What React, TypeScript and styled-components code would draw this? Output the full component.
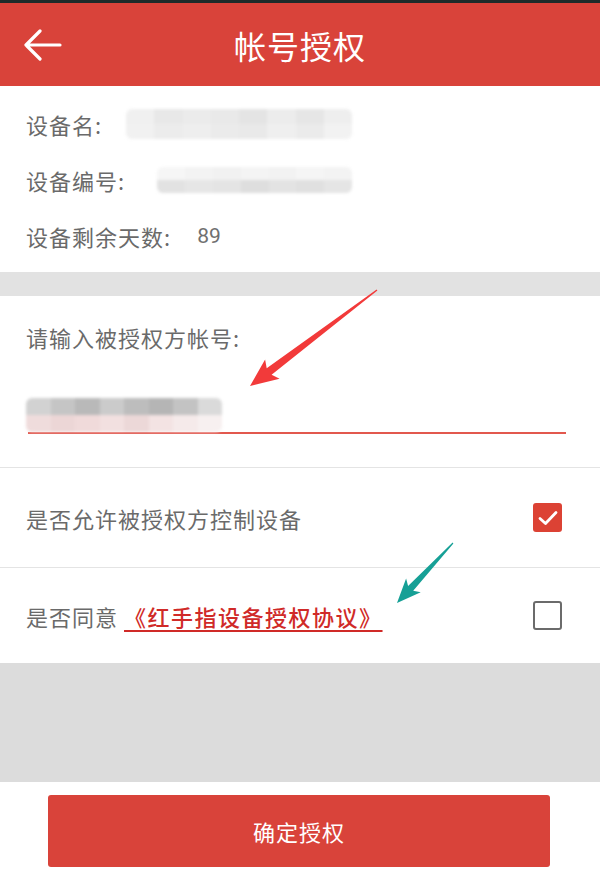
import React from 'react';
import styled, { createGlobalStyle } from 'styled-components';

const GlobalStyle = createGlobalStyle`
  html, body {
    margin: 0;
    padding: 0;
    background: #ffffff;
  }
  body {
    font-family: "Noto Sans CJK SC", "Noto Sans", sans-serif;
  }
`;

const Page = styled.div`
  position: relative;
  width: 600px;
  height: 878px;
  display: flex;
  flex-direction: column;
  background: #ffffff;
  overflow: hidden;
`;

const StatusStrip = styled.div`
  height: 3px;
  background: #1e2b2a;
`;

const Header = styled.header`
  height: 83px;
  background: #d9433a;
  display: flex;
  align-items: center;
  position: relative;
`;

const BackButton = styled.div`
  width: 64px;
  padding-left: 22px;
  display: flex;
  align-items: center;
`;

const Title = styled.h1`
  flex: 1;
  margin: 0 86px 0 0;
  text-align: center;
  color: #ffffff;
  font-size: 32px;
  font-weight: 400;
  letter-spacing: 1px;
`;

const InfoSection = styled.section`
  padding: 10px 0 8px 26px;
  background: #ffffff;
`;

const InfoRow = styled.div`
  height: 56px;
  display: flex;
  align-items: center;
`;

const Label = styled.span`
  color: #6a6a6a;
  font-size: 22px;
  letter-spacing: 1px;
  white-space: nowrap;
`;

const Value = styled.span`
  color: #707070;
  font-size: 21px;
  font-family: "Roboto", "Noto Sans", sans-serif;
  margin-left: 26px;
`;

const Mosaic = styled.div<{ $w: number; $h: number; $ml: number }>`
  width: ${p => p.$w}px;
  height: ${p => p.$h}px;
  margin-left: ${p => p.$ml}px;
  display: flex;
  flex-direction: column;
  filter: blur(1.4px);
  border-radius: 6px;
  overflow: hidden;
`;

const MosaicLine = styled.div`
  flex: 1;
  display: flex;
`;

const MosaicCell = styled.div`
  flex: 1;
`;

const Gap = styled.div<{ $h: number; $bg: string }>`
  height: ${p => p.$h}px;
  background: ${p => p.$bg};
`;

const AccountSection = styled.section`
  padding: 25px 34px 33px 26px;
`;

const FieldLabel = styled(Label)`
  display: block;
  line-height: 32px;
`;

const InputLine = styled.div`
  margin-top: 43px;
  margin-left: 2px;
  height: 36px;
  border-bottom: 2px solid #e2584e;
  display: flex;
  align-items: flex-end;
`;

const Divider = styled.div`
  height: 1px;
  background: #e4e4e4;
`;

const OptionRow = styled.div<{ $h: number }>`
  height: ${p => p.$h}px;
  display: flex;
  align-items: center;
  justify-content: space-between;
  padding: 0 38px 0 26px;
`;

const AgreementLink = styled.span`
  color: #d02a28;
  font-size: 22px;
  font-weight: 500;
  text-decoration: underline;
  text-decoration-thickness: 1.5px;
  text-underline-offset: 4px;
  margin-left: 6px;
  letter-spacing: 1.5px;
`;

const Checkbox = styled.div<{ $checked?: boolean }>`
  width: 29px;
  height: 29px;
  box-sizing: border-box;
  border-radius: 3px;
  background: ${p => (p.$checked ? '#dc4234' : 'transparent')};
  border: ${p => (p.$checked ? 'none' : '2.5px solid #6b6b6b')};
  display: flex;
  align-items: center;
  justify-content: center;
`;

const FillArea = styled.div`
  flex: 1;
  background: #dcdcdc;
`;

const Footer = styled.footer`
  height: 96px;
  box-sizing: border-box;
  padding: 13px 50px 11px 48px;
  background: #ffffff;
`;

const ConfirmButton = styled.button`
  width: 100%;
  height: 72px;
  border: none;
  border-radius: 3px;
  background: #d9433a;
  color: #ffffff;
  font-family: "Noto Sans CJK SC", sans-serif;
  font-size: 22px;
  letter-spacing: 1px;
`;

const Annotations = styled.svg`
  position: absolute;
  left: 0;
  top: 0;
  pointer-events: none;
`;

const mosaicRows: Record<string, string[][]> = {
  name: [
    ['#f0f0f0', '#e8e8e8', '#ebebeb', '#e9e9e9', '#e4e4e4', '#ececec', '#e6e6e6', '#eeeeee'],
    ['#f1f1f1', '#ececec', '#eeeeee', '#ebebeb', '#e9e9e9', '#efefef', '#ebebeb', '#f2f2f2'],
  ],
  serial: [
    ['#f6f6f6', '#f3f3f3', '#f1f1f1', '#f4f4f4', '#f2f2f2', '#f5f5f5', '#f3f3f3'],
    ['#e2e2e2', '#e6e6e6', '#e4e4e4', '#dedede', '#e3e3e3', '#e0e0e0', '#e5e5e5'],
  ],
  account: [
    ['#d2d2d2', '#c5c5c5', '#b9b9b9', '#cbcbcb', '#bdbdbd', '#b5b5b5', '#c3c3c3', '#dadada'],
    ['#efdcdc', '#ecd6d6', '#f0dada', '#f2e0e0', '#ecd8d8', '#f3e3e3', '#f5eaea', '#f7f0f0'],
  ],
};

const Blur = ({ kind, w, h, ml }: { kind: string; w: number; h: number; ml: number }) => (
  <Mosaic $w={w} $h={h} $ml={ml}>
    {mosaicRows[kind].map((line, i) => (
      <MosaicLine key={i}>
        {line.map((c, j) => (
          <MosaicCell key={j} style={{ background: c }} />
        ))}
      </MosaicLine>
    ))}
  </Mosaic>
);

// build a tapered annotation arrow from tail to tip
function arrowPoints(tx: number, ty: number, px: number, py: number, head: number, shaft: number, wing: number) {
  const dx = px - tx;
  const dy = py - ty;
  const len = Math.hypot(dx, dy);
  const ux = dx / len;
  const uy = dy / len;
  const nx = -uy;
  const ny = ux;
  const bx = px - ux * head;
  const by = py - uy * head;
  const wx = bx - ux * 4;
  const wy = by - uy * 4;
  const pts = [
    [tx + nx * 0.6, ty + ny * 0.6],
    [bx + nx * shaft, by + ny * shaft],
    [wx + nx * wing, wy + ny * wing],
    [px, py],
    [wx - nx * wing, wy - ny * wing],
    [bx - nx * shaft, by - ny * shaft],
    [tx - nx * 0.6, ty - ny * 0.6],
  ];
  return pts.map(p => p.map(v => v.toFixed(1)).join(',')).join(' ');
}

const App = () => (
  <Page>
    <GlobalStyle />
    <StatusStrip />
    <Header>
      <BackButton>
        <svg width="40" height="32" viewBox="0 0 40 32">
          <path d="M18 2 L4 16 L18 30 M4 16 H38" stroke="#ffffff" strokeWidth="3.2" fill="none" strokeLinecap="round" strokeLinejoin="round" />
        </svg>
      </BackButton>
      <Title>帐号授权</Title>
    </Header>

    <InfoSection>
      <InfoRow>
        <Label>设备名:</Label>
        <Blur kind="name" w={226} h={30} ml={24} />
      </InfoRow>
      <InfoRow>
        <Label>设备编号:</Label>
        <Blur kind="serial" w={195} h={26} ml={32} />
      </InfoRow>
      <InfoRow>
        <Label>设备剩余天数:</Label>
        <Value>89</Value>
      </InfoRow>
    </InfoSection>

    <Gap $h={24} $bg="#e2e2e2" />

    <AccountSection>
      <FieldLabel>请输入被授权方帐号:</FieldLabel>
      <InputLine>
        <Blur kind="account" w={196} h={34} ml={-2} />
      </InputLine>
    </AccountSection>

    <Divider />
    <OptionRow $h={99}>
      <Label>是否允许被授权方控制设备</Label>
      <Checkbox $checked>
        <svg width="20" height="16" viewBox="0 0 20 16">
          <path d="M2 8.5 L7.5 13.5 L18 2.5" stroke="#ffffff" strokeWidth="2.8" fill="none" strokeLinecap="round" strokeLinejoin="round" />
        </svg>
      </Checkbox>
    </OptionRow>
    <Divider />
    <OptionRow $h={95}>
      <span>
        <Label>是否同意</Label>
        <AgreementLink>《红手指设备授权协议》</AgreementLink>
      </span>
      <Checkbox />
    </OptionRow>

    <FillArea />

    <Footer>
      <ConfirmButton>确定授权</ConfirmButton>
    </Footer>

    <Annotations width="600" height="878" viewBox="0 0 600 878">
      <polygon points={arrowPoints(377, 290, 250, 386, 24, 4, 12)} fill="#f23a3a" />
      <polygon points={arrowPoints(453, 543, 397, 603, 20, 3.5, 10)} fill="#16a096" />
    </Annotations>
  </Page>
);

export default App;
